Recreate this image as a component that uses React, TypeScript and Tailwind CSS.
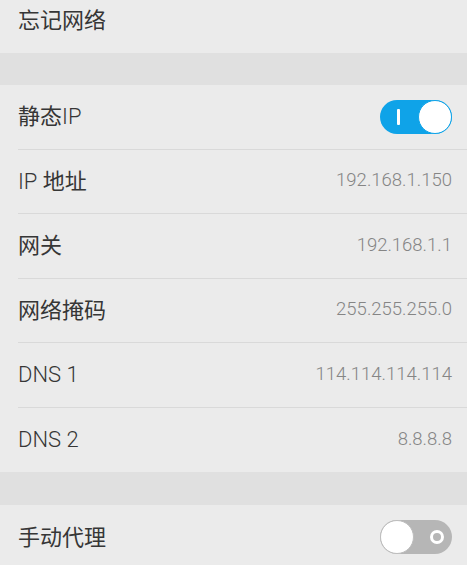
import React from "react";

const font = { fontFamily: 'Roboto, "Noto Sans CJK SC", sans-serif' };

function Label({ text }: { text: string }) {
  const parts = text.split(/([A-Za-z0-9 ]+)/).filter((p) => p.length > 0);
  return (
    <span className="text-[22px] text-[#363636] whitespace-pre">
      {parts.map((p, i) =>
        /[A-Za-z0-9]/.test(p) ? (
          <span key={i} className="font-light">{p}</span>
        ) : (
          <span key={i} className="font-normal">{p}</span>
        )
      )}
    </span>
  );
}

function OnToggle() {
  return (
    <div className="relative w-[72px] h-[34px] rounded-full bg-[#0fa3e8] flex items-center">
      <div className="absolute left-[17px] top-[9px] w-[3px] h-[16px] bg-white rounded-[1px]" />
      <div className="absolute right-0 top-0 w-[34px] h-[34px] rounded-full bg-white border-[1.5px] border-[#0fa3e8]" />
    </div>
  );
}

function OffToggle() {
  return (
    <div className="relative w-[72px] h-[34px] rounded-full bg-[#b6b6b6]">
      <div className="absolute left-0 top-0 w-[34px] h-[34px] rounded-full bg-white border-[1.5px] border-[#bdbdbd]" />
      <div className="absolute right-[8px] top-[10px] w-[14px] h-[14px] rounded-full border-[3px] border-white" />
    </div>
  );
}

function Row({ label, value, last, toggle }: { label: string; value?: string; last?: boolean; toggle?: React.ReactNode }) {
  return (
    <div className="pl-[18px]">
      <div className={`h-[64.5px] flex items-center justify-between pr-[15px] ${last ? "" : "border-b border-[#d9d9d9]"}`}>
        <Label text={label} />
        {value && <span className="text-[18.5px] text-[#858585] font-light">{value}</span>}
        {toggle}
      </div>
    </div>
  );
}

export default function App() {
  return (
    <div className="w-[467px] h-[565px] overflow-hidden bg-[#ebebeb]" style={font}>
      <div className="h-[53px] pl-[18px] pb-[13px] flex items-center">
        <Label text="忘记网络" />
      </div>
      <div className="h-[32px] bg-[#e0e0e0]" />
      <Row label="静态IP" toggle={<OnToggle />} />
      <Row label="IP 地址" value="192.168.1.150" />
      <Row label="网关" value="192.168.1.1" />
      <Row label="网络掩码" value="255.255.255.0" />
      <Row label="DNS 1" value="114.114.114.114" />
      <Row label="DNS 2" value="8.8.8.8" last />
      <div className="h-[33px] bg-[#e0e0e0]" />
      <Row label="手动代理" toggle={<OffToggle />} last />
    </div>
  );
}
